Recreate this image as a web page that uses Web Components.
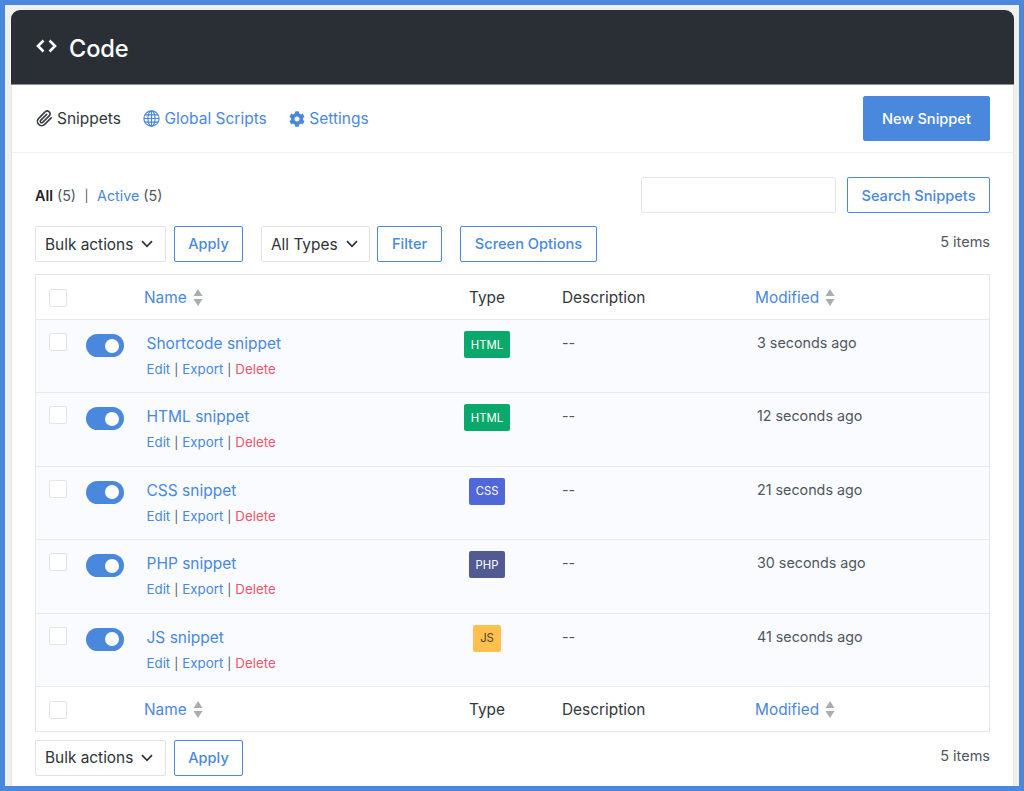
<!DOCTYPE html>
<html lang="en"><head><meta charset="utf-8"><title>Code Snippets</title>
<style>
html,body{margin:0;padding:0;height:100%}
body{font-family:Inter,"Liberation Sans",sans-serif;color:#32373c;background:#f0f0f1;overflow:hidden}
</style></head><body>
<code-app>
  <code-header>Code</code-header>
  <code-nav></code-nav>
  <section-body></section-body>
</code-app>
<script>
const base=`:host,*{box-sizing:border-box}`;
function def(name,css,html,init){
  customElements.define(name,class extends HTMLElement{
    connectedCallback(){
      if(this.shadowRoot)return;
      const r=this.attachShadow({mode:'open'});
      r.innerHTML=`<style>${base}${css}</style>`+(typeof html==='function'?html(this):html);
      if(init)init(r,this);
    }
  });
}
const BLUE='#4a88de';
const icons={
 code:`<svg width="21" height="14" viewBox="0 0 21 14" fill="none" stroke="#fff" stroke-width="2.6"><path d="M7.5 1.5 2 7l5.5 5.5M13.5 1.5 19 7l-5.5 5.5"/></svg>`,
 clip:`<svg width="17" height="17" viewBox="0 0 24 24" fill="none" stroke="#3a3f44" stroke-width="2.3" stroke-linecap="round" stroke-linejoin="round"><path d="M21.44 11.05l-9.19 9.19a6 6 0 0 1-8.49-8.49l9.19-9.19a4 4 0 0 1 5.66 5.66l-9.2 9.19a2 2 0 0 1-2.83-2.83l8.49-8.48"/></svg>`,
 globe:`<svg width="17" height="17" viewBox="0 0 17 17" fill="none" stroke="${BLUE}" stroke-width="1.2"><circle cx="8.5" cy="8.5" r="7.6"/><ellipse cx="8.5" cy="8.5" rx="3.6" ry="7.6"/><path d="M8.5 1v15M1 8.5h15M2 4.8h13M2 12.2h13"/></svg>`,
 cog:`<svg width="16" height="16" viewBox="0 0 512 512" fill="${BLUE}"><path d="M487.4 315.7l-42.6-24.6c4.3-23.2 4.3-47 0-70.2l42.6-24.6c4.9-2.8 7.1-8.6 5.5-14-11.1-35.6-30-67.8-54.7-94.6-3.8-4.1-10-5.1-14.8-2.3L380.8 110c-17.9-15.4-38.5-27.3-60.8-35.1V25.8c0-5.6-3.9-10.5-9.4-11.7-36.7-8.2-74.3-7.8-109.2 0-5.5 1.2-9.4 6.1-9.4 11.7V75c-22.2 7.9-42.8 19.8-60.8 35.1L88.7 85.5c-4.9-2.8-11-1.9-14.8 2.3-24.7 26.7-43.6 58.9-54.7 94.6-1.7 5.4.6 11.2 5.5 14L67.3 221c-4.3 23.2-4.3 47 0 70.2l-42.6 24.6c-4.9 2.8-7.1 8.6-5.5 14 11.1 35.6 30 67.8 54.7 94.6 3.8 4.1 10 5.1 14.8 2.3l42.6-24.6c17.9 15.4 38.5 27.3 60.8 35.1v49.2c0 5.6 3.9 10.5 9.4 11.7 36.7 8.2 74.3 7.8 109.2 0 5.5-1.2 9.4-6.1 9.4-11.7v-49.2c22.2-7.9 42.8-19.8 60.8-35.1l42.6 24.6c4.9 2.8 11 1.9 14.8-2.3 24.7-26.7 43.6-58.9 54.7-94.6 1.5-5.5-.7-11.3-5.6-14.1zM256 336c-44.1 0-80-35.9-80-80s35.9-80 80-80 80 35.9 80 80-35.9 80-80 80z"/></svg>`
};
def('code-app',`:host{display:flex;flex-direction:column;height:791px;border:5px solid ${BLUE};padding:5px 5px 0 6px;background:#f0f0f1;overflow:hidden}
 .p{background:#fff;flex:1;display:flex;flex-direction:column;border-right:1px solid #e6e6e8;border-left:1px solid #e6e6e8;border-radius:9px 9px 0 0}`,`<div class="p"><slot></slot></div>`);
def('code-header',`:host{display:flex;align-items:center;gap:12px;height:75px;margin:0 -1px;padding:3px 25px 0;background:#2a2f36;border-radius:9px 9px 0 0;border-bottom:1px solid #8a8d91;color:#fff;font-size:23.6px;font-weight:500;letter-spacing:-.1px}
 svg{display:block;margin-top:-5px}`,()=>`${icons.code}<span><slot></slot></span>`);
def('nav-link',`:host{display:inline-flex;align-items:center;gap:4px;font-size:15.5px;color:${BLUE}}
 :host([current]){color:#32373c}`,t=>`${icons[t.getAttribute('icon')]}<span><slot></slot></span>`);
def('ui-button',`:host{display:inline-flex;align-items:center;justify-content:center;height:36px;border:1px solid ${BLUE};border-radius:2px;background:#fff;color:${BLUE};font-size:14.6px;font-weight:500;white-space:nowrap}
 :host([primary]){background:${BLUE};color:#fff;height:45px}`,`<slot></slot>`);
def('ui-select',`:host{display:inline-flex;align-items:center;height:36px;border:1px solid #e2e2e4;border-radius:2px;background:#fff;font-size:15.4px;color:#2c3338;padding-left:9px;gap:8px;white-space:nowrap}
 svg{display:block}`,`<slot></slot><svg width="12" height="8" viewBox="0 0 12 8" fill="none" stroke="#2c3338" stroke-width="1.7"><path d="M1 1.2 6 6.3l5-5.1"/></svg>`);
def('code-nav',`:host{display:flex;align-items:center;height:68px;padding:0 23px 0 24px;border-bottom:1px solid #f0f0f1}
 .l{display:flex;gap:22.5px;flex:1}ui-button{width:127px}`,`<div class="l"><nav-link icon="clip" current>Snippets</nav-link><nav-link icon="globe">Global Scripts</nav-link><nav-link icon="cog">Settings</nav-link></div><ui-button primary>New Snippet</ui-button>`);
def('status-row',`:host{display:flex;align-items:center;height:36px;font-size:14.3px;color:#50575e}
 .l{flex:1;display:flex;gap:5px;align-items:center}b{color:#1d2327;font-weight:600}a{color:${BLUE}}
 .s{margin:0 3.5px;font-size:12px;color:#50575e}.i{width:195px;height:36px;border:1px solid #e6e6e8;border-radius:2px;background:#fff;margin-right:11px}ui-button{width:143px;padding-top:1px}`,
 `<div class="l"><span><b>All</b> (5)</span><span class="s">|</span><span><a>Active</a> (5)</span></div><input class="i" aria-label="Search"><ui-button>Search Snippets</ui-button>`);
def('action-row',`:host{display:flex;align-items:center;height:36px;font-size:14.5px;color:#50575e}
 .bulk{width:131px;margin-right:8px}.ap{width:69px}.ty{width:109px;margin:0 7px 0 18px}.fi{width:65px}.so{width:137px;margin-left:18px}.c{margin-left:auto;margin-top:-4px}.top{margin-top:-6px}`,
 t=>t.hasAttribute('top')?`<ui-select class="bulk">Bulk actions</ui-select><ui-button class="ap">Apply</ui-button><ui-select class="ty">All Types</ui-select><ui-button class="fi">Filter</ui-button><ui-button class="so">Screen Options</ui-button><span class="c top">5 items</span>`
 :`<ui-select class="bulk">Bulk actions</ui-select><ui-button class="ap">Apply</ui-button><span class="c">5 items</span>`);
def('check-box',`:host{display:block;width:18px;height:18px;border:1px solid #e3e3e6;border-radius:2px;background:#fff}`,``);
def('toggle-switch',`:host{display:flex;align-items:center;justify-content:flex-end;width:38px;height:23px;border-radius:12px;background:${BLUE};padding-right:5px}
 i{display:block;width:14px;height:14px;border-radius:50%;background:#fff}`,`<i></i>`);
def('sort-arrows',`:host{display:inline-block;width:10px;height:17px}svg{display:block}`,`<svg width="10" height="17" viewBox="0 0 10 17" fill="#aaacae"><path d="M5 0 9.5 7h-9zM5 17 .5 10h9z"/></svg>`);
def('type-badge',`:host{display:inline-flex;align-items:center;justify-content:center;height:27px;border-radius:2px;font-size:11.3px;font-weight:400;color:#fff;background:var(--c);padding:0 var(--p,7px)}`,`<slot></slot>`);
def('table-head',`:host{display:grid;grid-template-columns:50px 58px 320px 98px 193px 1fr;align-items:center;height:44px;font-size:15.4px;color:#32373c;background:#fff}
 :host([foot]){height:45px;border-top:1px solid #e8e8ea;padding-top:1px}
 check-box{margin:2px 0 0 13px}a{color:${BLUE}}.n{display:flex;align-items:center;gap:6px}.t{width:46px;text-align:center}`,
 `<check-box></check-box><span></span><span class="n"><a>Name</a><sort-arrows></sort-arrows></span><span class="t">Type</span><span>Description</span><span class="n"><a>Modified</a><sort-arrows></sort-arrows></span>`);
const badge={HTML:['#0aa86a','7px'],CSS:['#5067d8','7px'],PHP:['#525a92','7px'],JS:['#ffc04d','7px']};
def('snippet-row',`:host{display:grid;grid-template-columns:50px 58px 320px 98px 193px 1fr;height:73.4px;padding-top:11px;background:#f9fbfe;border-top:1px solid #e8e8ea;font-size:14.3px;color:#50575e;align-items:start}
 check-box{margin:2px 0 0 13px}toggle-switch{margin-top:3px}
 .nm{padding:3px 0 0 2.5px}.title{font-size:15.5px;color:${BLUE};line-height:20px}.acts{font-size:13.3px;line-height:16px;margin-top:7px;color:#50575e;white-space:nowrap}.acts a{color:${BLUE}}.acts .d{color:#f1556c}.acts i{font-style:normal;font-size:12px;margin:0 .3px}
 .t{width:46px;display:flex;justify-content:center}.de{padding-top:2px;line-height:20px}.mo{padding:2px 0 0 2px;line-height:20px}`,
 t=>{const ty=t.getAttribute('type');const b=badge[ty];return `<check-box></check-box><toggle-switch></toggle-switch><div class="nm"><div class="title">${t.getAttribute('name')}</div><div class="acts"><a>Edit</a> <i>|</i> <a>Export</a> <i>|</i> <a class="d">Delete</a></div></div><div class="t"><type-badge style="--c:${b[0]};--p:${b[1]};${ty==='JS'?'color:#4a4030':''}">${ty}</type-badge></div><div class="de">--</div><div class="mo">${t.getAttribute('ago')}</div>`});
def('snippet-table',`:host{display:block;border:1px solid #e6e6e8;background:#fff}`,`<table-head></table-head>
 <snippet-row name="Shortcode snippet" type="HTML" ago="3 seconds ago"></snippet-row>
 <snippet-row name="HTML snippet" type="HTML" ago="12 seconds ago"></snippet-row>
 <snippet-row name="CSS snippet" type="CSS" ago="21 seconds ago"></snippet-row>
 <snippet-row name="PHP snippet" type="PHP" ago="30 seconds ago"></snippet-row>
 <snippet-row name="JS snippet" type="JS" ago="41 seconds ago"></snippet-row>
 <table-head foot></table-head>`);
def('section-body',`:host{display:flex;flex-direction:column;padding:24px 23px 0 23px}
 .a{margin-top:13px}snippet-table{margin-top:12px}.b{margin-top:7.7px}`,
 `<status-row></status-row><action-row class="a" top></action-row><snippet-table></snippet-table><action-row class="b"></action-row>`);
</script>
</body></html>
